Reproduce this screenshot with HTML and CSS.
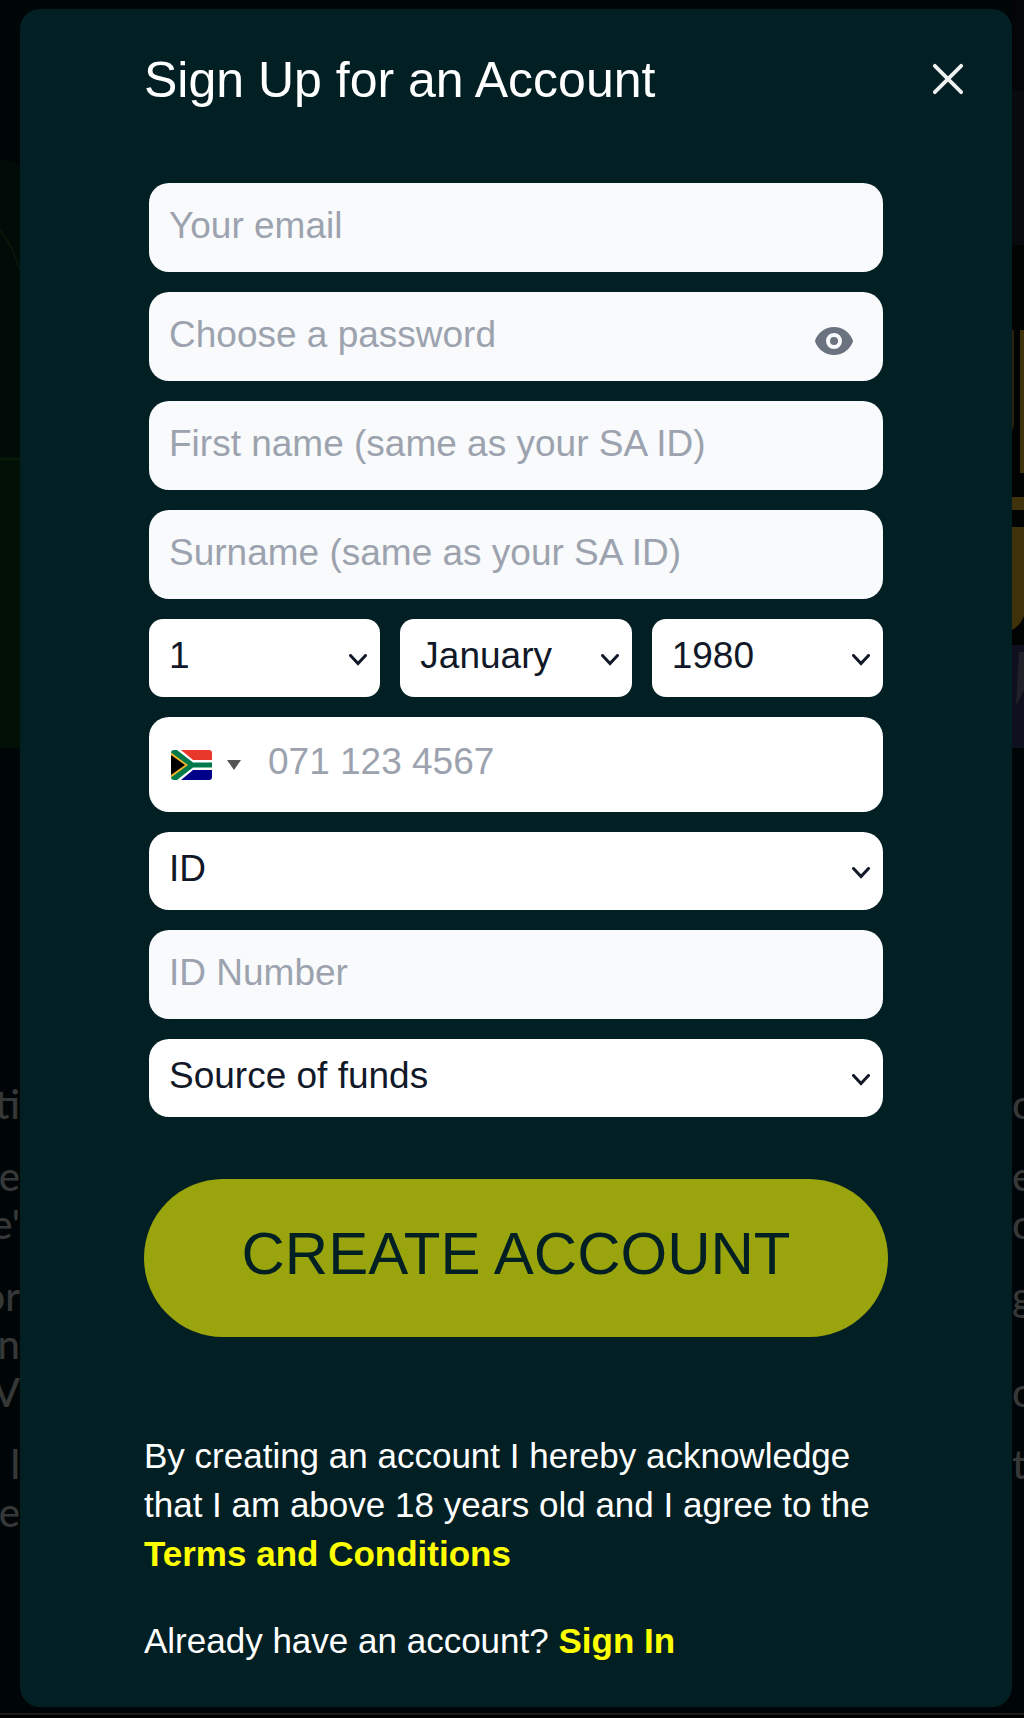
FILE: index.html
```html
<!DOCTYPE html>
<html lang="en">

<head>
    <meta charset="UTF-8">
    <meta name="viewport" content="width=device-width, initial-scale=1.0">
    <title>Sign Up for an Account</title>
    <link rel="stylesheet" href="styles.css">
</head>

<body>
    <!-- Dimmed page behind the dialog -->
    <div class="backdrop" aria-hidden="true">
        <div class="hero">
            <svg class="hero-left" viewBox="0 0 20 748" preserveAspectRatio="none">
                <rect width="20" height="748" fill="#000506" />
                <path d="M0 160Q12 160 20 166V459H0Z" fill="#010c08" />
                <path d="M0 230Q12 245 20 270" stroke="#0b1608" stroke-width="2" fill="none" />
                <rect y="459" width="20" height="289" fill="#021006" />
                <path d="M0 459H20" stroke="#061a08" stroke-width="3" />
            </svg>
            <svg class="hero-right" viewBox="0 0 12 748" preserveAspectRatio="none">
                <rect width="12" height="748" fill="#030506" />
                <rect y="90" width="12" height="155" fill="#070b0d" />
                <rect y="245" width="12" height="400" fill="#020303" />
                <path d="M0 330H2V425L0 432Z" fill="#2a210a" />
                <rect x="8" y="330" width="4" height="143" fill="#40330b" />
                <rect y="497" width="12" height="13" fill="#40330b" />
                <path d="M0 527H12V616Q8 626 0 630Z" fill="#3f310a" />
                <rect y="645" width="12" height="103" fill="#0e101f" />
                <path d="M7 652H12V690L4 706Z" fill="#202128" />
            </svg>
        </div>
        <div class="article">
            <div class="article-edge">
                <p>ti</p>
                <p>e<br>e'</p>
                <p>or<br>n<br>V</p>
                <p>e&nbsp;l<br>e</p>
            </div>
            <div class="article-edge article-edge-right">
                <p>o</p>
                <p>es<br>o</p>
                <p>g<br>&nbsp;l<br>o</p>
                <p>t</p>
            </div>
        </div>
    </div>

    <main class="modal" role="dialog" aria-labelledby="modalTitle">
        <header class="modal-header">
            <h1 id="modalTitle">Sign Up for an Account</h1>
            <button type="button" class="close-button" aria-label="Close">
                <svg width="32" height="32" viewBox="0 0 34 34">
                    <path d="M3 3L31 31M31 3L3 31" stroke="#f1f1f1" stroke-width="4" stroke-linecap="round" />
                </svg>
            </button>
        </header>

        <form class="signup-form">
            <div class="fields">
                <input class="field" type="email" placeholder="Your email" aria-label="Your email">
                <div class="field password-field">
                    <input type="password" placeholder="Choose a password" aria-label="Choose a password">
                    <button type="button" class="eye-button" aria-label="Show password">
                        <svg width="40" height="40" viewBox="0 0 20 20" fill="#6b7280">
                            <path d="M10 12a2 2 0 100-4 2 2 0 000 4z" />
                            <path fill-rule="evenodd" clip-rule="evenodd" d="M.458 10C1.732 5.943 5.522 3 10 3s8.268 2.943 9.542 7c-1.274 4.057-5.064 7-9.542 7S1.732 14.057.458 10zM14 10a4 4 0 11-8 0 4 4 0 018 0z" />
                        </svg>
                    </button>
                </div>
                <input class="field" type="text" placeholder="First name (same as your SA ID)" aria-label="First name">
                <input class="field" type="text" placeholder="Surname (same as your SA ID)" aria-label="Surname">

                <div class="birth-date">
                    <select class="select" aria-label="Day of birth">
                        <option>1</option>
                    </select>
                    <select class="select" aria-label="Month of birth">
                        <option>January</option>
                    </select>
                    <select class="select" aria-label="Year of birth">
                        <option>1980</option>
                    </select>
                </div>

                <div class="field phone-field">
                    <button type="button" class="country-button" aria-label="South Africa">
                        <svg class="flag" width="41" height="30" viewBox="0 0 41 30">
                            <rect width="41" height="30" fill="#fff" />
                            <path d="M10 0H41V10H22Z" fill="#e8382c" />
                            <path d="M10 30H41V20H22Z" fill="#00008b" />
                            <path d="M0 0H6L22 12.500H41V17.500H22L6 30H0Z" fill="#007a4b" />
                            <path d="M0 2.500L17 15L0 27.500Z" fill="#f5b52a" />
                            <path d="M0 5L14 15L0 25Z" fill="#000" />
                        </svg>
                        <svg width="14" height="10" viewBox="0 0 14 10">
                            <path d="M0 0H14L7 10Z" fill="#555" />
                        </svg>
                    </button>
                    <input type="tel" placeholder="071 123 4567" aria-label="Phone number">
                </div>

                <select class="select select-wide" aria-label="Document type">
                    <option>ID</option>
                </select>
                <input class="field" type="text" placeholder="ID Number" aria-label="ID Number">
                <select class="select select-wide" aria-label="Source of funds">
                    <option>Source of funds</option>
                </select>
            </div>

            <button type="submit" class="submit-button">CREATE ACCOUNT</button>
        </form>

        <div class="legal">
            <p>By creating an account I hereby acknowledge that I am above 18 years old and I agree to the <a href="#terms">Terms and Conditions</a></p>
            <p>Already have an account? <a href="#signin">Sign In</a></p>
        </div>
    </main>
</body>

</html>
```

FILE: styles.css
```css
* {
    box-sizing: border-box;
}

body {
    margin: 0;
    padding: 9px 12px 11px 20px;
    position: relative;
    background: #000607;
    font-family: "Liberation Sans", Arial, sans-serif;
    color: #fff;
}

button,
input,
select {
    font: inherit;
}

/* Backdrop */
.backdrop {
    position: absolute;
    inset: 0;
    overflow: hidden;
    border-bottom: 3px solid #000;
}

.backdrop::after {
    content: "";
    position: absolute;
    left: 0;
    right: 0;
    bottom: 0;
    height: 2px;
    background: #1b1c1d;
}

.hero {
    display: flex;
    justify-content: space-between;
    height: 748px;
    margin-bottom: 332px;
}

.hero-left {
    width: 20px;
    height: 748px;
}

.hero-right {
    width: 12px;
    height: 748px;
}

.article {
    display: flex;
    justify-content: space-between;
    font-family: Lato, sans-serif;
    font-size: 40px;
    font-weight: 500;
    line-height: 48px;
    color: #363838;
}

.article p {
    margin: 0 0 24px;
    white-space: nowrap;
}

.article-edge {
    display: flex;
    flex-direction: column;
    align-items: flex-end;
    width: 20px;
    text-align: right;
}

.article-edge-right {
    align-items: flex-start;
    width: 12px;
    text-align: left;
}

/* Dialog */
.modal {
    position: relative;
    padding: 43px 0 42px;
    border-radius: 20px;
    background: #022024;
}

.modal-header {
    display: flex;
    justify-content: space-between;
    align-items: center;
    padding: 0 48px 0 124px;
}

.modal-header h1 {
    margin: 0;
    font-size: 50px;
    font-weight: 400;
    line-height: 56px;
}

.close-button,
.eye-button,
.country-button {
    display: flex;
    align-items: center;
    padding: 0;
    border: 0;
    background: none;
    cursor: pointer;
}

.close-button {
    padding-bottom: 3px;
}

.signup-form {
    padding: 75px 124px 0;
}

.fields {
    display: flex;
    flex-direction: column;
    gap: 20px;
    padding: 0 5px;
    font-size: 37px;
    line-height: 45px;
}

.field {
    width: 100%;
    padding: 20px 20px 24px;
    border: 0;
    border-radius: 20px;
    background: #f9fafc;
    color: #111827;
}

.field input {
    flex: 1;
    min-width: 0;
    padding: 0;
    border: 0;
    background: none;
    color: #111827;
}

input::placeholder {
    color: #9ca3af;
    opacity: 1;
}

.password-field,
.phone-field {
    display: flex;
    align-items: center;
}

.password-field {
    padding-right: 29px;
}

.eye-button {
    height: 45px;
    padding-top: 12px;
}

.phone-field {
    padding: 22px 20px 28px 22px;
    background: #fff;
}

.country-button {
    gap: 15px;
    padding-top: 6px;
    margin-right: 27px;
}

.flag {
    border-radius: 3px;
}

.birth-date {
    display: grid;
    grid-template-columns: repeat(3, 1fr);
    gap: 20px;
}

.select {
    width: 100%;
    padding: 14px 48px 18px 20px;
    border: 0;
    border-radius: 14px;
    appearance: none;
    background: #fff url("data:image/svg+xml,%3Csvg xmlns='http://www.w3.org/2000/svg' width='18' height='12' viewBox='0 0 18 12'%3E%3Cpath d='M1.500 1.500L9 9.500L16.500 1.500' fill='none' stroke='%23111827' stroke-width='3' stroke-linecap='round'/%3E%3C/svg%3E") no-repeat right 13px top 35px;
    color: #111827;
    line-height: 46px;
}

.select-wide {
    border-radius: 20px;
}

.submit-button {
    width: 100%;
    margin-top: 62px;
    padding: 41px 20px 49px;
    border: 0;
    border-radius: 80px;
    background: #9aa50e;
    color: #022024;
    font-size: 60px;
    line-height: 68px;
    cursor: pointer;
}

.legal {
    padding: 94px 124px 0;
    font-size: 35px;
    line-height: 49px;
}

.legal p {
    margin: 0 0 38px;
}

.legal p:last-child {
    margin: 0;
}

.legal a {
    color: #ff0;
    font-weight: 700;
    text-decoration: none;
}
```
